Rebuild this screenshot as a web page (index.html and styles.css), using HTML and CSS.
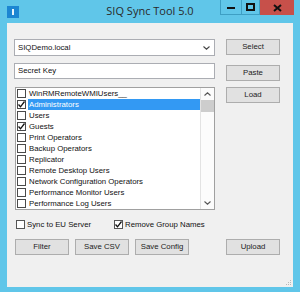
FILE: index.html
```html
<!DOCTYPE html>
<html>
<head>
<meta charset="utf-8">
<link rel="stylesheet" href="styles.css">
</head>
<body>
<div class="window">
  <div class="titlebar">
    <div class="tb-left"><span class="app-icon"><span class="app-icon-bar"></span></span></div>
    <div class="title">SIQ Sync Tool 5.0</div>
    <div class="tb-right">
      <span class="wbtn wmin"><svg width="8" height="3" viewBox="0 0 8 3"><rect x="0" y="0" width="8" height="2" fill="#111"/></svg></span>
      <span class="wbtn wmax"><svg width="9" height="8" viewBox="0 0 9 8"><rect x="1" y="1" width="7" height="6" fill="none" stroke="#111" stroke-width="2"/></svg></span>
      <span class="wbtn wclose"><svg width="9" height="8" viewBox="0 0 9 8"><path d="M1 1 L8 7 M8 1 L1 7" stroke="#111" stroke-width="2"/></svg></span>
    </div>
  </div>
  <div class="client">
    <div class="row r1">
      <div class="combo"><span class="field-text">SIQDemo.local</span><svg class="chev" width="7" height="4" viewBox="0 0 7 4"><path d="M0.5 0.5 L3.5 3.2 L6.5 0.5" fill="none" stroke="#444" stroke-width="1.1"/></svg></div>
      <button class="btn">Select</button>
    </div>
    <div class="row r2">
      <div class="textbox"><span class="field-text">Secret Key</span></div>
      <button class="btn btn-low">Paste</button>
    </div>
    <div class="row r3">
      <div class="listbox">
        <div class="items">
          <div class="item"><span class="cb"></span><span class="lbl">WinRMRemoteWMIUsers__</span></div>
          <div class="item sel"><span class="cb"><svg width="9" height="9" viewBox="0 0 9 9"><path d="M1.5 4.5 L3.5 6.8 L7.5 1.5" fill="none" stroke="#111" stroke-width="1.3"/></svg></span><span class="lbl">Administrators</span></div>
          <div class="item"><span class="cb"></span><span class="lbl">Users</span></div>
          <div class="item"><span class="cb"><svg width="9" height="9" viewBox="0 0 9 9"><path d="M1.5 4.5 L3.5 6.8 L7.5 1.5" fill="none" stroke="#111" stroke-width="1.3"/></svg></span><span class="lbl">Guests</span></div>
          <div class="item"><span class="cb"></span><span class="lbl">Print Operators</span></div>
          <div class="item"><span class="cb"></span><span class="lbl">Backup Operators</span></div>
          <div class="item"><span class="cb"></span><span class="lbl">Replicator</span></div>
          <div class="item"><span class="cb"></span><span class="lbl">Remote Desktop Users</span></div>
          <div class="item"><span class="cb"></span><span class="lbl">Network Configuration Operators</span></div>
          <div class="item"><span class="cb"></span><span class="lbl">Performance Monitor Users</span></div>
          <div class="item"><span class="cb"></span><span class="lbl">Performance Log Users</span></div>
        </div>
        <div class="scrollbar">
          <div class="sb-arrow"><svg width="7" height="4" viewBox="0 0 7 4"><path d="M0.5 3.5 L3.5 0.8 L6.5 3.5" fill="none" stroke="#555" stroke-width="1.1"/></svg></div>
          <div class="sb-thumb"></div>
          <div class="sb-track"></div>
          <div class="sb-arrow"><svg width="7" height="4" viewBox="0 0 7 4"><path d="M0.5 0.5 L3.5 3.2 L6.5 0.5" fill="none" stroke="#555" stroke-width="1.1"/></svg></div>
        </div>
      </div>
      <button class="btn">Load</button>
    </div>
    <div class="row r4">
      <label class="check c-sync"><span class="cb"></span><span>Sync to EU Server</span></label>
      <label class="check c-remove"><span class="cb"><svg width="9" height="9" viewBox="0 0 9 9"><path d="M1.5 4.5 L3.5 6.8 L7.5 1.5" fill="none" stroke="#111" stroke-width="1.3"/></svg></span><span>Remove Group Names</span></label>
    </div>
    <div class="row r5">
      <button class="btn">Filter</button>
      <button class="btn">Save CSV</button>
      <button class="btn">Save Config</button>
      <button class="btn btn-upload">Upload</button>
    </div>
    <div class="grip">
      <svg width="6" height="6" viewBox="0 0 6 6"><g fill="#b8b8b8"><rect x="4" y="0" width="1" height="1"/><rect x="2" y="2" width="1" height="1"/><rect x="4" y="2" width="1" height="1"/><rect x="0" y="4" width="1" height="1"/><rect x="2" y="4" width="1" height="1"/><rect x="4" y="4" width="1" height="1"/></g></svg>
    </div>
  </div>
</div>
</body>
</html>
```
FILE: styles.css
```css
html, body {
  margin: 0;
  padding: 0;
}
body {
  width: 300px;
  height: 292px;
  overflow: hidden;
  font-family: "Liberation Sans", Arial, sans-serif;
  font-size: 7.8px;
  color: #111;
}
.window {
  width: 300px;
  height: 292px;
  background: #60c6e9;
  box-sizing: border-box;
  display: flex;
  flex-direction: column;
}
.titlebar {
  height: 23px;
  display: grid;
  grid-template-columns: 1fr auto 1fr;
  align-items: start;
}
.tb-left {
  padding-left: 7px;
  padding-top: 6px;
}
.app-icon {
  display: block;
  width: 12px;
  height: 12px;
  background: #1c86d2;
  position: relative;
}
.app-icon-bar {
  position: absolute;
  left: 5px;
  top: 3px;
  width: 2px;
  height: 6px;
  background: #e8f4fc;
}
.title {
  font-family: "Open Sans", "Noto Sans", sans-serif;
  font-size: 11px;
  line-height: 14px;
  padding-top: 4px;
  color: #2a2a2a;
}
.tb-right {
  display: flex;
  justify-content: flex-end;
  padding-right: 6px;
}
.wbtn {
  height: 15px;
  display: flex;
  align-items: center;
  justify-content: center;
  box-sizing: border-box;
}
.wmin {
  width: 21px;
  border: 1px solid #3e9fc4;
  border-top: none;
  border-right: none;
}
.wmin svg { margin-top: 3px; }
.wmax {
  width: 19px;
  border: 1px solid #3e9fc4;
  border-top: none;
}
.wclose {
  width: 34px;
  background: #c7504a;
}
.client {
  flex: 1;
  margin: 0 7px 5px 7px;
  background: #f0f0f0;
  padding: 16px 0 0 7px;
  position: relative;
  box-sizing: border-box;
}
.row {
  display: flex;
  align-items: flex-start;
}
.r1 { height: 17px; margin-bottom: 7px; }
.r2 { height: 18px; margin-bottom: 6px; }
.r3 { height: 123px; }
.r4 { height: 10px; margin-top: 9px; align-items: center; }
.r5 { margin-top: 10px; }

.combo, .textbox {
  width: 201px;
  background: #fff;
  border: 1px solid #abadb3;
  box-sizing: border-box;
  display: flex;
  align-items: center;
  padding-left: 3px;
}
.combo { height: 17px; position: relative; }
.textbox { height: 16px; }
.field-text { line-height: 12px; }
.chev {
  margin-left: auto;
  margin-right: 4px;
}
.btn {
  width: 54px;
  height: 16px;
  margin: 0 0 0 11px;
  padding: 0;
  background: #e1e1e1;
  border: 1px solid #adadad;
  box-sizing: border-box;
  font-family: "Liberation Sans", Arial, sans-serif;
  font-size: 7.8px;
  color: #222;
  line-height: 12px;
  text-align: center;
}
.btn-low { margin-top: 2px; }

.listbox {
  width: 200px;
  height: 123px;
  margin-left: 1px;
  border: 1px solid #a0a0a0;
  box-sizing: border-box;
  background: #fff;
  display: flex;
}
.items {
  flex: 1;
  padding-top: 0;
}
.item {
  height: 11px;
  display: flex;
  align-items: center;
}
.cb {
  width: 9px;
  height: 9px;
  box-sizing: border-box;
  border: 1px solid #4a4a4a;
  background: #fff;
  flex: none;
  display: block;
  position: relative;
}
.cb svg {
  position: absolute;
  left: -1px;
  top: -1px;
}
.item .cb { margin-left: 1px; }
.lbl {
  flex: 1;
  margin-left: 2px;
  padding-left: 1px;
  height: 11px;
  line-height: 11px;
  white-space: nowrap;
}
.item.sel .lbl {
  background: #3399f3;
  color: #fff;
}
.scrollbar {
  width: 13px;
  border-left: 1px solid #e3e3e3;
  background: #fcfcfc;
  display: flex;
  flex-direction: column;
}
.sb-arrow {
  height: 12px;
  display: flex;
  align-items: center;
  justify-content: center;
}
.sb-thumb {
  height: 12px;
  background: #cdcdcd;
}
.sb-track { flex: 1; }

.check {
  display: flex;
  align-items: center;
  white-space: nowrap;
}
.check .cb { margin-right: 2px; border-color: #555; }
.c-sync { margin-left: 2px; width: 98px; }

.r5 .btn:first-child { margin-left: 1px; }
.r5 .btn { margin-left: 6px; }
.r5 .btn-upload { margin-left: 37px; }

.grip {
  position: absolute;
  right: 1px;
  bottom: 1px;
  line-height: 0;
}
```
